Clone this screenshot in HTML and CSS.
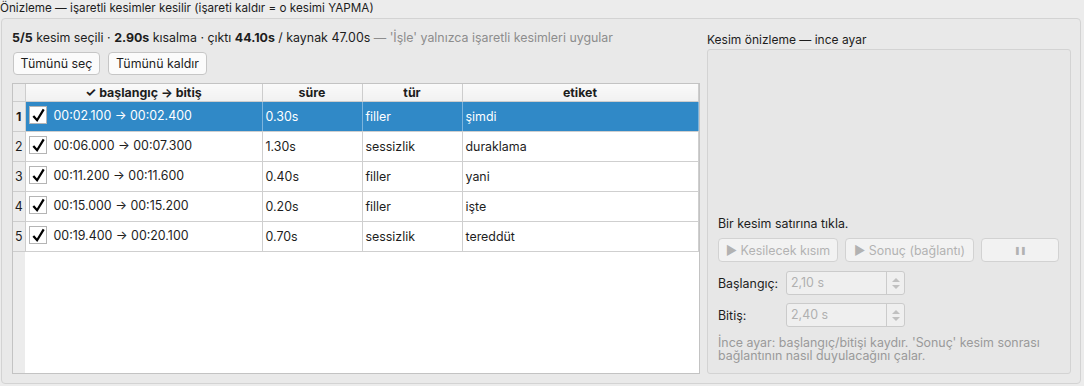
FILE: index.html
```html
<!DOCTYPE html>
<html lang="tr">
<head>
    <meta charset="UTF-8">
    <title>Önizleme</title>
    <link rel="stylesheet" href="styles.css">
</head>
<body>
    <div class="title">Önizleme — işaretli kesimler kesilir (işareti kaldır = o kesimi YAPMA)</div>

    <div class="group">
        <div class="left">
            <div class="stats">
                <b>5/5</b> kesim seçili · <b>2.90s</b> kısalma · çıktı <b>44.10s</b> / kaynak 47.00s
                <span class="muted">— 'İşle' yalnızca işaretli kesimleri uygular</span>
            </div>
            <div class="buttons">
                <button class="btn sel-all">Tümünü seç</button>
                <button class="btn sel-none">Tümünü kaldır</button>
            </div>

            <div class="table-wrap">
                <table class="cuts">
                    <thead>
                        <tr>
                            <th class="num"></th>
                            <th class="c1">✓ başlangıç → bitiş</th>
                            <th class="c2">süre</th>
                            <th class="c3">tür</th>
                            <th class="c4">etiket</th>
                        </tr>
                    </thead>
                    <tbody>
                        <tr class="selected">
                            <td class="num">1</td>
                            <td><span class="check"><svg viewBox="0 0 18 18" width="17" height="17"><path d="M3.5 9.5 L7.5 14 L14.5 2.5" fill="none" stroke="#000" stroke-width="2.4"/></svg></span>00:02.100 → 00:02.400</td>
                            <td>0.30s</td>
                            <td>filler</td>
                            <td>şimdi</td>
                        </tr>
                        <tr>
                            <td class="num">2</td>
                            <td><span class="check"><svg viewBox="0 0 18 18" width="17" height="17"><path d="M3.5 9.5 L7.5 14 L14.5 2.5" fill="none" stroke="#000" stroke-width="2.4"/></svg></span>00:06.000 → 00:07.300</td>
                            <td>1.30s</td>
                            <td>sessizlik</td>
                            <td>duraklama</td>
                        </tr>
                        <tr>
                            <td class="num">3</td>
                            <td><span class="check"><svg viewBox="0 0 18 18" width="17" height="17"><path d="M3.5 9.5 L7.5 14 L14.5 2.5" fill="none" stroke="#000" stroke-width="2.4"/></svg></span>00:11.200 → 00:11.600</td>
                            <td>0.40s</td>
                            <td>filler</td>
                            <td>yani</td>
                        </tr>
                        <tr>
                            <td class="num">4</td>
                            <td><span class="check"><svg viewBox="0 0 18 18" width="17" height="17"><path d="M3.5 9.5 L7.5 14 L14.5 2.5" fill="none" stroke="#000" stroke-width="2.4"/></svg></span>00:15.000 → 00:15.200</td>
                            <td>0.20s</td>
                            <td>filler</td>
                            <td>işte</td>
                        </tr>
                        <tr>
                            <td class="num">5</td>
                            <td><span class="check"><svg viewBox="0 0 18 18" width="17" height="17"><path d="M3.5 9.5 L7.5 14 L14.5 2.5" fill="none" stroke="#000" stroke-width="2.4"/></svg></span>00:19.400 → 00:20.100</td>
                            <td>0.70s</td>
                            <td>sessizlik</td>
                            <td>tereddüt</td>
                        </tr>
                    </tbody>
                </table>
            </div>
        </div>

        <div class="right">
            <div class="panel-title">Kesim önizleme — ince ayar</div>
            <div class="panel">
                <div class="hint-top">Bir kesim satırına tıkla.</div>
                <div class="play-row">
                    <button class="btn disabled b1">▶ Kesilecek kısım</button>
                    <button class="btn disabled b2">▶ Sonuç (bağlantı)</button>
                    <button class="btn disabled b3">❚❚</button>
                </div>
                <div class="field">
                    <span class="label">Başlangıç:</span>
                    <div class="spin">
                        <span class="spin-val">2,10 s</span>
                        <span class="spin-arrows"><i class="up"></i><i class="down"></i></span>
                    </div>
                </div>
                <div class="field">
                    <span class="label">Bitiş:</span>
                    <div class="spin">
                        <span class="spin-val">2,40 s</span>
                        <span class="spin-arrows"><i class="up"></i><i class="down"></i></span>
                    </div>
                </div>
                <div class="note">İnce ayar: başlangıç/bitişi kaydır. 'Sonuç' kesim sonrası bağlantının nasıl duyulacağını çalar.</div>
            </div>
        </div>
    </div>
</body>
</html>
```

FILE: styles.css
```css
* {
    box-sizing: border-box;
    margin: 0;
    padding: 0;
}

body {
    background-color: #ececec;
    color: #1d1d1d;
    font-family: Inter, "Noto Sans", sans-serif;
    font-size: 12.4px;
    width: 1084px;
    height: 386px;
    overflow: hidden;
}

.title {
    height: 18px;
    line-height: 16px;
    font-size: 11.7px;
}

.group {
    margin: 0 3px 0 1px;
    height: 366px;
    border: 1px solid #d3d3d3;
    border-radius: 4px;
    background: #e9e9e9;
    display: flex;
    padding: 0 0 0 10px;
}

.left {
    width: 688px;
    display: flex;
    flex-direction: column;
}

.stats {
    height: 33px;
    padding-top: 11px;
    line-height: 16px;
    white-space: nowrap;
}

.stats b {
    font-weight: 700;
}

.muted {
    color: #8d8d8d;
}

.buttons {
    display: flex;
    gap: 8px;
    padding-left: 1px;
}

.btn {
    font-family: inherit;
    font-size: 12.4px;
    color: #1d1d1d;
    background: #fbfbfb;
    border: 1px solid #c6c6c6;
    border-radius: 4px;
    height: 23px;
    padding: 0;
}

.sel-all { width: 87px; }
.sel-none { width: 99px; }

.btn.disabled {
    color: #b2b2b2;
    background: #f2f2f2;
    border-color: #d2d2d2;
}

.table-wrap {
    margin-top: 8px;
    height: 291px;
    border: 1px solid #c3c3c3;
    background: linear-gradient(to right, #ececec 12px, #fff 12px);
}

.cuts {
    border-collapse: collapse;
    table-layout: fixed;
}

.cuts th {
    height: 17px;
    font-weight: 700;
    background: linear-gradient(#fafafa, #f1f1f1);
    border-right: 1px solid #cdcdcd;
    border-bottom: 1px solid #cdcdcd;
    text-align: center;
}

.cuts th.num {
    width: 12px;
    background: #ececec;
}

.cuts th.c1 { width: 237px; }
.cuts th.c2 { width: 100px; }
.cuts th.c3 { width: 100px; }
.cuts th.c4 { width: 236px; }

.cuts td {
    height: 30px;
    padding: 0 0 0 3px;
    border-right: 1px solid #cfcfcf;
    border-bottom: 1px solid #cfcfcf;
    background: #fff;
    white-space: nowrap;
    vertical-align: middle;
}

.cuts td.num {
    padding: 0;
    text-align: center;
    background: #ececec;
    border-color: #cdcdcd;
}

.cuts tr.selected td {
    background: #3089c7;
    color: #fff;
    border-right-color: #7db4dc;
}

.cuts tr.selected td.num {
    background: #ececec;
    color: #1d1d1d;
    font-weight: 700;
    border-right-color: #cdcdcd;
}

.check {
    display: inline-block;
    width: 18px;
    height: 18px;
    background: #fff;
    border: 1px solid #b5b5b5;
    vertical-align: middle;
    margin: -2px 7px 0 0;
    line-height: 0;
}

.right {
    flex: 1;
    padding: 13px 0 0 7px;
    display: flex;
    flex-direction: column;
}

.panel-title {
    height: 16px;
    line-height: 16px;
    font-size: 12px;
}

.panel {
    margin-top: 1px;
    width: 364px;
    height: 325px;
    border: 1px solid #d3d3d3;
    border-radius: 3px;
    background: #e7e7e7;
    padding: 0 0 11px 10px;
    display: flex;
    flex-direction: column;
    justify-content: flex-end;
}

.hint-top {
    line-height: 16px;
    margin-bottom: 6px;
}

.play-row {
    display: flex;
    gap: 7px;
    margin-bottom: 9px;
}

.play-row .btn {
    height: 24px;
}

.b1 { width: 120px; }
.b2 { width: 129px; }
.b3 { width: 78px; font-size: 8px; letter-spacing: -1px; }

.field {
    display: flex;
    align-items: center;
    height: 24px;
}

.field + .field {
    margin-top: 8px;
}

.label {
    width: 68px;
}

.spin {
    width: 119px;
    height: 24px;
    border: 1px solid #cbcbcb;
    border-radius: 3px;
    background: #efefef;
    display: flex;
}

.spin-val {
    flex: 1;
    color: #b0b0b0;
    padding-left: 4px;
    line-height: 22px;
}

.spin-arrows {
    width: 18px;
    border-left: 1px solid #cbcbcb;
    display: flex;
    flex-direction: column;
    align-items: center;
    justify-content: center;
    gap: 3px;
}

.spin-arrows i {
    width: 0;
    height: 0;
    border-left: 4px solid transparent;
    border-right: 4px solid transparent;
}

.spin-arrows .up { border-bottom: 4px solid #c0c0c0; }
.spin-arrows .down { border-top: 4px solid #c0c0c0; }

.note {
    color: #9a9a9a;
    line-height: 13px;
    padding-right: 14px;
    margin-top: 9px;
}
```
